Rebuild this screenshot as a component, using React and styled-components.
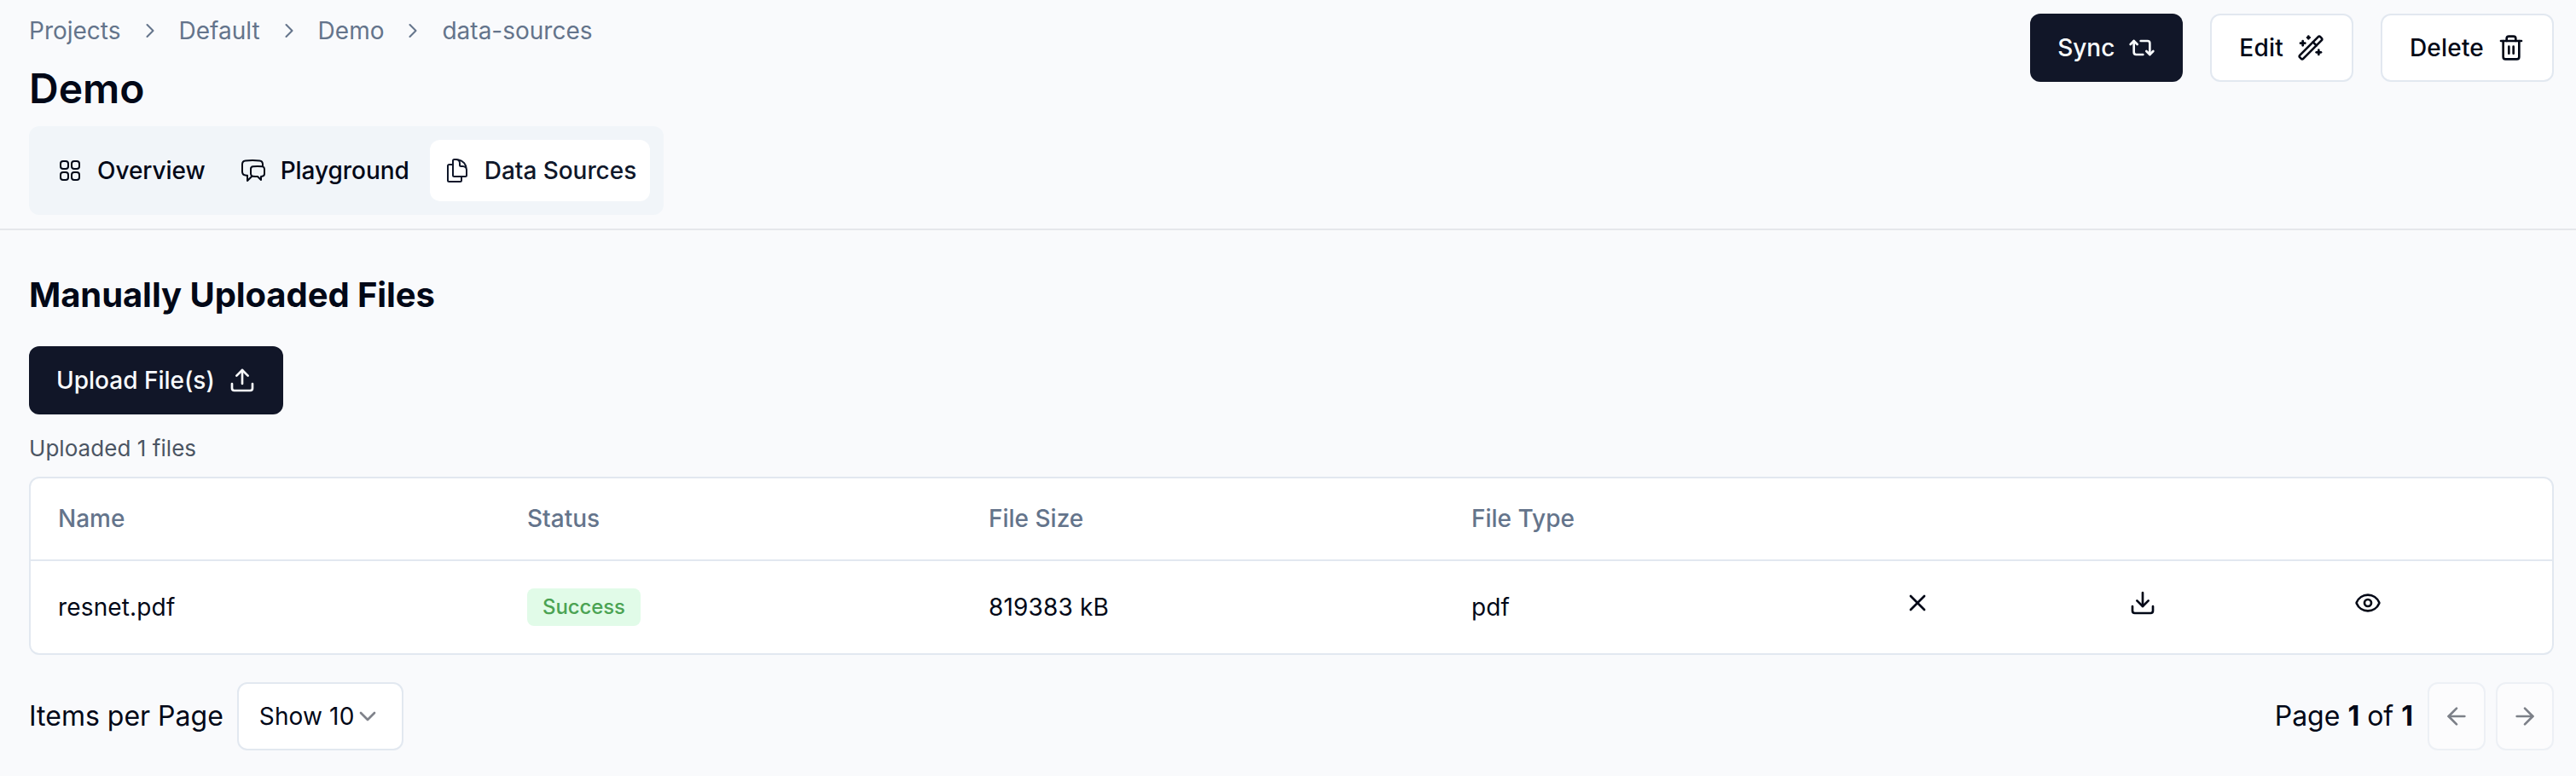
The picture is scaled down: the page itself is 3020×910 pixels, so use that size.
import React from 'react';
import styled, { createGlobalStyle, css } from 'styled-components';
import { Repeat2, Wand2, Trash2, Upload, Download, X, Eye, ArrowLeft, ArrowRight, ChevronRight, ChevronDown } from 'lucide-react';
import { HiOutlineSquares2X2, HiOutlineChatBubbleLeftRight, HiOutlineDocumentDuplicate } from 'react-icons/hi2';

const GlobalStyle = createGlobalStyle`
    * { box-sizing: border-box; }
    body {
        margin: 0;
        background: #f9fafc;
        color: #020817;
        font-family: Inter, sans-serif;
        font-size: 28px;
        line-height: 40px;
    }
    svg { flex-shrink: 0; }
`
const Page = styled.div`
    height: 910px;
    overflow: hidden;
`
const Header = styled.header`
    display: flex;
    justify-content: space-between;
    align-items: flex-start;
    height: 270px;
    padding: 16px 26px 0 34px;
    border-bottom: 2px solid #e5e7eb;
`
const Crumbs = styled.nav`
    display: flex;
    align-items: center;
    gap: 20px;
    color: #64748b;
`
const Title = styled.h1`
    margin: 15px 0 11px;
    font-size: 48px;
    line-height: 66px;
    font-weight: 600;
    letter-spacing: 0;
`
const Tabs = styled.div`
    display: inline-flex;
    align-items: center;
    gap: 8px;
    height: 104px;
    padding: 16px;
    background: #f1f5f9;
    border-radius: 12px;
`
const Tab = styled.button`
    display: flex;
    align-items: center;
    gap: 16px;
    height: 72px;
    padding: 0 16px;
    border: 0;
    border-radius: 12px;
    background: ${props => props.$active ? '#fff' : 'transparent'};
    color: ${props => props.$active ? '#0f172a' : '#020817'};
    font: inherit;
    font-weight: 500;
    letter-spacing: -0.05px;
`
const Actions = styled.div`
    display: flex;
    gap: 32px;
`
const Button = styled.button`
    display: inline-flex;
    align-items: center;
    gap: 16px;
    height: 80px;
    padding: 0 32px;
    border: 2px solid #e2e8f0;
    border-radius: 12px;
    background: #fff;
    color: #020817;
    font: inherit;
    font-weight: 500;
    letter-spacing: 0.2px;
    ${props => props.$primary && css`
        border: 0;
        background: #111628;
        color: #f8fafc;
        letter-spacing: 0;
    `}
`
const Main = styled.main`
    padding: 50px 26px 0 34px;
`
const Heading = styled.h2`
    margin: 0 0 34px;
    font-size: 40px;
    line-height: 52px;
    font-weight: 700;
    letter-spacing: -0.08px;
`
const Count = styled.p`
    margin: 20px 0 13px;
    font-size: 26px;
    line-height: 40px;
    letter-spacing: 0.05px;
    color: #4b5563;
`
const Table = styled.div`
    border: 2px solid #e2e8f0;
    border-radius: 12px;
    background: #fff;
`
const Row = styled.div`
    display: grid;
    grid-template-columns: 550fr 541fr 566fr 507fr 264fr 264fr 264fr;
    align-items: center;
    height: 108px;
    letter-spacing: 0.15px;
`
const HeadRow = styled(Row)`
    height: 97px;
    padding-bottom: 1px;
    border-bottom: 2px solid #e2e8f0;
    color: #64748b;
    font-weight: 500;
    letter-spacing: 0;
`
const Cell = styled.div`
    padding: 0 32px;
`
const IconButton = styled.button`
    display: block;
    margin: 0 0 10px;
    padding: 0;
    border: 0;
    background: none;
    color: inherit;
    line-height: 0;
`
const Badge = styled.span`
    display: block;
    width: fit-content;
    height: 44px;
    padding: 0 18px;
    border-radius: 8px;
    background: #e1fbe8;
    color: #4ba353;
    font-size: 24px;
    line-height: 43px;
    font-weight: 500;
    letter-spacing: -0.1px;
`
const Footer = styled.footer`
    display: flex;
    justify-content: space-between;
    align-items: center;
    margin-top: 32px;
    font-size: 32px;
`
const PageSize = styled.div`
    display: flex;
    align-items: center;
    gap: 16px;
`
const Select = styled.button`
    display: flex;
    align-items: center;
    justify-content: space-between;
    width: 195px;
    height: 80px;
    padding: 0 24px;
    border: 2px solid #e2e8f0;
    border-radius: 12px;
    background: #fff;
    color: #020817;
    font: inherit;
    font-size: 28px;
    letter-spacing: 0.15px;
    white-space: nowrap;
    svg { opacity: 0.5; }
`
const Pager = styled.div`
    display: flex;
    align-items: center;
    gap: 12px;
`
const PageLabel = styled.span`
    margin-right: 5px;
    b { font-weight: 700; }
`
const PagerButton = styled(Button)`
    justify-content: center;
    width: 68px;
    padding: 0;
    opacity: 0.5;
`

const crumbs = ['Projects', 'Default', 'Demo', 'data-sources']
const columns = ['Name', 'Status', 'File Size', 'File Type']
const files = [
    { name: 'resnet.pdf', status: 'Success', size: '819383 kB', type: 'pdf' },
]

const FileRow = ({file}) => (
    <Row>
        <Cell>{file.name}</Cell>
        <Cell><Badge>{file.status}</Badge></Cell>
        <Cell>{file.size}</Cell>
        <Cell>{file.type}</Cell>
        <Cell><IconButton><X size={32} /></IconButton></Cell>
        <Cell><IconButton><Download size={32} /></IconButton></Cell>
        <Cell><IconButton><Eye size={32} /></IconButton></Cell>
    </Row>
)

const App = () => {
    return (
        <Page>
            <GlobalStyle />
            <Header>
                <div>
                    <Crumbs>
                        {crumbs.map((crumb, i) => (
                            <React.Fragment key={crumb}>
                                {i > 0 && <ChevronRight size={28} strokeWidth={1.8} />}
                                <span>{crumb}</span>
                            </React.Fragment>
                        ))}
                    </Crumbs>
                    <Title>Demo</Title>
                    <Tabs>
                        <Tab><HiOutlineSquares2X2 size={32} />Overview</Tab>
                        <Tab><HiOutlineChatBubbleLeftRight size={32} />Playground</Tab>
                        <Tab $active><HiOutlineDocumentDuplicate size={32} />Data Sources</Tab>
                    </Tabs>
                </div>
                <Actions>
                    <Button $primary>Sync <Repeat2 size={32} /></Button>
                    <Button>Edit <Wand2 size={32} /></Button>
                    <Button>Delete <Trash2 size={32} /></Button>
                </Actions>
            </Header>
            <Main>
                <Heading>Manually Uploaded Files</Heading>
                <Button $primary>Upload File(s) <Upload size={32} /></Button>
                <Count>Uploaded {files.length} files</Count>
                <Table>
                    <HeadRow>
                        {columns.map(column => <Cell key={column}>{column}</Cell>)}
                    </HeadRow>
                    {files.map(file => <FileRow key={file.name} file={file} />)}
                </Table>
                <Footer>
                    <PageSize>
                        Items per Page
                        <Select>Show 10<ChevronDown size={32} /></Select>
                    </PageSize>
                    <Pager>
                        <PageLabel>Page <b>1</b> of <b>1</b></PageLabel>
                        <PagerButton disabled><ArrowLeft size={32} /></PagerButton>
                        <PagerButton disabled><ArrowRight size={32} /></PagerButton>
                    </Pager>
                </Footer>
            </Main>
        </Page>
    )
}

export default App
